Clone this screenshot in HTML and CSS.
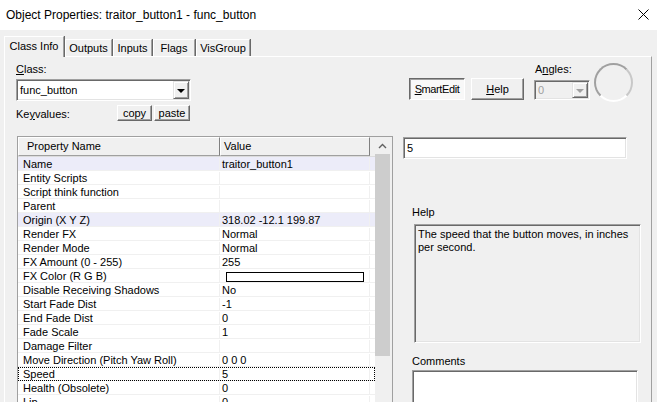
FILE: index.html
```html
<!DOCTYPE html>
<html>
<head>
<meta charset="utf-8">
<link rel="stylesheet" href="styles.css">
</head>
<body>
<div class="titlebar">
  <span class="title">Object Properties: traitor_button1 - func_button</span>
  <svg class="close" width="11" height="11" viewBox="0 0 11 11"><path d="M0.5 0.5 L10.5 10.5 M10.5 0.5 L0.5 10.5" stroke="#000" stroke-width="1" fill="none"/></svg>
</div>
<div class="tabs">
  <div class="tab active t-class">Class Info</div>
  <div class="tab t-outputs">Outputs</div>
  <div class="tab t-inputs">Inputs</div>
  <div class="tab t-flags">Flags</div>
  <div class="tab t-vis">VisGroup</div>
</div>
<div class="panel">
  <div class="top">
    <div class="classgroup">
      <div class="label"><u>C</u>lass:</div>
      <div class="combo">
        <span class="combo-text">func_button</span>
        <span class="drop"><span class="tri"></span></span>
      </div>
      <div class="kvrow">
        <span class="kvlabel">Ke<u>y</u>values:</span>
        <span class="btn small copy">copy</span>
        <span class="btn small paste">paste</span>
      </div>
    </div>
    <span class="btn pressed smartedit"><u>S</u>martEdit</span>
    <span class="btn help"><u>H</u>elp</span>
    <div class="angles">
      <div class="label">A<u>n</u>gles:</div>
      <div class="combo disabled">
        <span class="combo-text">0</span>
        <span class="drop"><span class="tri"></span></span>
      </div>
    </div>
    <div class="dial"></div>
  </div>
  <div class="bottom">
    <div class="list">
      <div class="grid">
        <div class="hdr">
          <div class="hc1">Property Name</div>
          <div class="hc2">Value</div>
        </div>
        <div class="row sel"><div class="c1">Name</div><div class="c2">traitor_button1</div></div>
        <div class="row"><div class="c1">Entity Scripts</div><div class="c2"></div></div>
        <div class="row"><div class="c1">Script think function</div><div class="c2"></div></div>
        <div class="row"><div class="c1">Parent</div><div class="c2"></div></div>
        <div class="row sel"><div class="c1">Origin (X Y Z)</div><div class="c2">318.02 -12.1 199.87</div></div>
        <div class="row"><div class="c1">Render FX</div><div class="c2">Normal</div></div>
        <div class="row"><div class="c1">Render Mode</div><div class="c2">Normal</div></div>
        <div class="row"><div class="c1">FX Amount (0 - 255)</div><div class="c2">255</div></div>
        <div class="row"><div class="c1">FX Color (R G B)</div><div class="c2"><span class="swatch"></span></div></div>
        <div class="row"><div class="c1">Disable Receiving Shadows</div><div class="c2">No</div></div>
        <div class="row"><div class="c1">Start Fade Dist</div><div class="c2">-1</div></div>
        <div class="row"><div class="c1">End Fade Dist</div><div class="c2">0</div></div>
        <div class="row"><div class="c1">Fade Scale</div><div class="c2">1</div></div>
        <div class="row"><div class="c1">Damage Filter</div><div class="c2"></div></div>
        <div class="row"><div class="c1">Move Direction (Pitch Yaw Roll)</div><div class="c2">0 0 0</div></div>
        <div class="row focus"><div class="c1">Speed</div><div class="c2">5</div></div>
        <div class="row"><div class="c1">Health (Obsolete)</div><div class="c2">0</div></div>
        <div class="row"><div class="c1">Lip</div><div class="c2">0</div></div>
      </div>
      <div class="vscroll">
        <div class="up"><svg width="9" height="6" viewBox="0 0 9 6"><path d="M1 5 L4.5 1.5 L8 5" stroke="#606060" stroke-width="1.4" fill="none"/></svg></div>
        <div class="thumb"></div>
      </div>
    </div>
    <div class="side">
      <div class="edit">5</div>
      <div class="sidelabel helplabel">Help</div>
      <div class="helpbox">The speed that the button moves, in inches per second.</div>
      <div class="sidelabel commentslabel">Comments</div>
      <div class="comments"></div>
    </div>
  </div>
</div>
</body>
</html>
```
FILE: styles.css
```css
* { box-sizing: border-box; }
html, body { margin: 0; padding: 0; }
body {
  width: 657px;
  height: 402px;
  overflow: hidden;
  background: #f0f0f0;
  font-family: "Liberation Sans", Arial, sans-serif;
  font-size: 11px;
  color: #000;
}
u { text-decoration: underline; text-underline-offset: 1px; }

.titlebar {
  height: 30px;
  background: #fff;
  display: flex;
  align-items: center;
  justify-content: space-between;
  padding: 0 8px 1px 6px;
  font-size: 12px;
}
.close { display: block; margin-top: -1px; }

.tabs {
  display: flex;
  align-items: flex-end;
  height: 26px;
  padding-left: 4px;
}
.tab {
  height: 17px;
  line-height: 17px;
  text-align: center;
  border-top: 1px solid #fff;
  border-left: 1px solid #fff;
  border-right: 1px solid #a0a0a0;
  box-shadow: 1px 0 0 #696969;
  background: #f0f0f0;
}
.tab.active {
  height: 21px;
  line-height: 18px;
  margin-bottom: -1px;
  position: relative;
  z-index: 1;
}
.t-class { width: 60px; }
.t-outputs { width: 47px; margin-left: 1px; }
.t-inputs { width: 39px; margin-left: 1px; }
.t-flags { width: 42px; margin-left: 1px; }
.t-vis { width: 54px; margin-left: 1px; }

.panel {
  margin: 0 5px 0 4px;
  height: 346px;
  border-top: 1px solid #fff;
  border-left: 1px solid #fff;
  border-right: 1px solid #a0a0a0;
}

.top {
  display: flex;
  align-items: flex-start;
  height: 79px;
  padding: 5px 0 0 11px;
}
.classgroup {
  width: 175px;
  display: flex;
  flex-direction: column;
}
.label {
  height: 17px;
  line-height: 14px;
}
.combo {
  height: 22px;
  display: flex;
  align-items: center;
  justify-content: space-between;
  background: #fff;
  border: 1px solid;
  border-color: #a0a0a0 #fff #fff #a0a0a0;
  box-shadow: inset 1px 1px 0 #696969, inset -1px -1px 0 #e3e3e3;
  padding: 1px 1px 1px 3px;
}
.drop {
  width: 16px;
  height: 18px;
  background: #f0f0f0;
  border: 1px solid;
  border-color: #e3e3e3 #696969 #696969 #e3e3e3;
  box-shadow: inset 1px 1px 0 #fff, inset -1px -1px 0 #a0a0a0;
  display: flex;
  align-items: center;
  justify-content: center;
}
.tri {
  width: 0;
  height: 0;
  border-left: 4px solid transparent;
  border-right: 4px solid transparent;
  border-top: 4px solid #000;
  margin-top: 1px;
}
.combo.disabled {
  width: 56px;
  height: 20px;
  background: #f0f0f0;
  color: #a0a0a0;
}
.combo.disabled .drop { height: 16px; }
.combo.disabled .tri { border-top-color: #a0a0a0; }

.kvrow {
  display: flex;
  align-items: center;
  margin-top: 3px;
  height: 17px;
}
.kvlabel { width: 101px; padding-top: 3px; }
.btn {
  display: flex;
  align-items: center;
  justify-content: center;
  background: #f0f0f0;
  border: 1px solid;
  border-color: #fff #696969 #696969 #fff;
  box-shadow: inset -1px -1px 0 #a0a0a0;
}
.btn.small { height: 16px; }
.copy { width: 35px; margin-right: 2px; }
.paste { width: 36px; }
.smartedit {
  width: 56px;
  height: 22px;
  margin: 16px 0 0 218px;
  background: #f8f8f8;
  border-color: #696969 #fff #fff #696969;
  box-shadow: inset 1px 1px 0 #a0a0a0;
  letter-spacing: -0.4px;
}
.help {
  width: 53px;
  height: 22px;
  margin: 16px 0 0 6px;
}
.angles {
  margin-left: 10px;
  display: flex;
  flex-direction: column;
}
.angles .label { height: 18px; padding-left: 1px; }
.dial {
  width: 39px;
  height: 39px;
  margin: 1px 0 0 4px;
  border-radius: 50%;
  border: 2px solid;
  border-color: #a0a0a0 #c8c8c8 #fff #a0a0a0;
}

.bottom {
  display: flex;
  align-items: flex-start;
  padding-left: 12px;
}
.list {
  width: 376px;
  height: 266px;
  display: flex;
  background: #fff;
  border-top: 1px solid #a0a0a0;
  border-left: 1px solid #a0a0a0;
  border-right: 1px solid #a0a0a0;
  overflow: hidden;
}
.grid { width: 357px; }
.hdr {
  display: flex;
  height: 20px;
  background: #f0f0f0;
  border-bottom: 1px solid #dcdcdc;
}
.hc1, .hc2 {
  line-height: 17px;
  border-top: 1px solid #fff;
  border-left: 1px solid #fff;
  border-right: 1px solid #808080;
  border-bottom: 1px solid #a0a0a0;
}
.hc1 { width: 202px; padding-left: 8px; }
.hc2 { width: 150px; padding-left: 3px; }
.row {
  display: flex;
  height: 14px;
  line-height: 13px;
  padding-top: 1px;
  border-bottom: 1px solid #f0f0f0;
}
.row.sel { background: #ececf9; }
.row.focus { outline: 1px dotted #000; outline-offset: -1px; }
.c1 {
  width: 202px;
  padding-left: 5px;
  border-right: 1px solid #f0f0f0;
  white-space: nowrap;
}
.c2 {
  width: 150px;
  padding-left: 2px;
  border-right: 1px solid #f0f0f0;
}
.swatch {
  display: block;
  width: 138px;
  height: 10px;
  margin: 2px 0 0 4px;
  border: 1px solid #000;
  background: #fff;
}

.vscroll {
  width: 17px;
  height: 100%;
  background: #f0f0f0;
}
.up {
  width: 15px;
  height: 17px;
  display: flex;
  align-items: center;
  justify-content: center;
}
.thumb {
  width: 15px;
  height: 202px;
  background: #cdcdcd;
}

.side {
  display: flex;
  flex-direction: column;
  margin-left: 10px;
}
.edit {
  width: 224px;
  height: 22px;
  margin-top: 1px;
  background: #fff;
  border: 1px solid;
  border-color: #a0a0a0 #fff #fff #a0a0a0;
  box-shadow: inset 1px 1px 0 #696969, inset -1px -1px 0 #e3e3e3;
  padding: 2px 3px;
  line-height: 16px;
}
.sidelabel { margin-left: 9px; line-height: 13px; }
.helplabel { margin-top: 47px; }
.helpbox {
  width: 227px;
  height: 119px;
  margin: 5px 0 0 11px;
  border: 1px solid;
  border-color: #a0a0a0 #fff #fff #a0a0a0;
  box-shadow: inset 1px 1px 0 #696969, inset -1px -1px 0 #e3e3e3;
  padding: 3px 3px;
  line-height: 13px;
}
.commentslabel { margin-top: 12px; }
.comments {
  width: 226px;
  height: 40px;
  margin: 2px 0 0 9px;
  background: #fff;
  border: 1px solid;
  border-color: #a0a0a0 #fff #fff #a0a0a0;
  box-shadow: inset 1px 1px 0 #696969, inset -1px -1px 0 #e3e3e3;
}
```
